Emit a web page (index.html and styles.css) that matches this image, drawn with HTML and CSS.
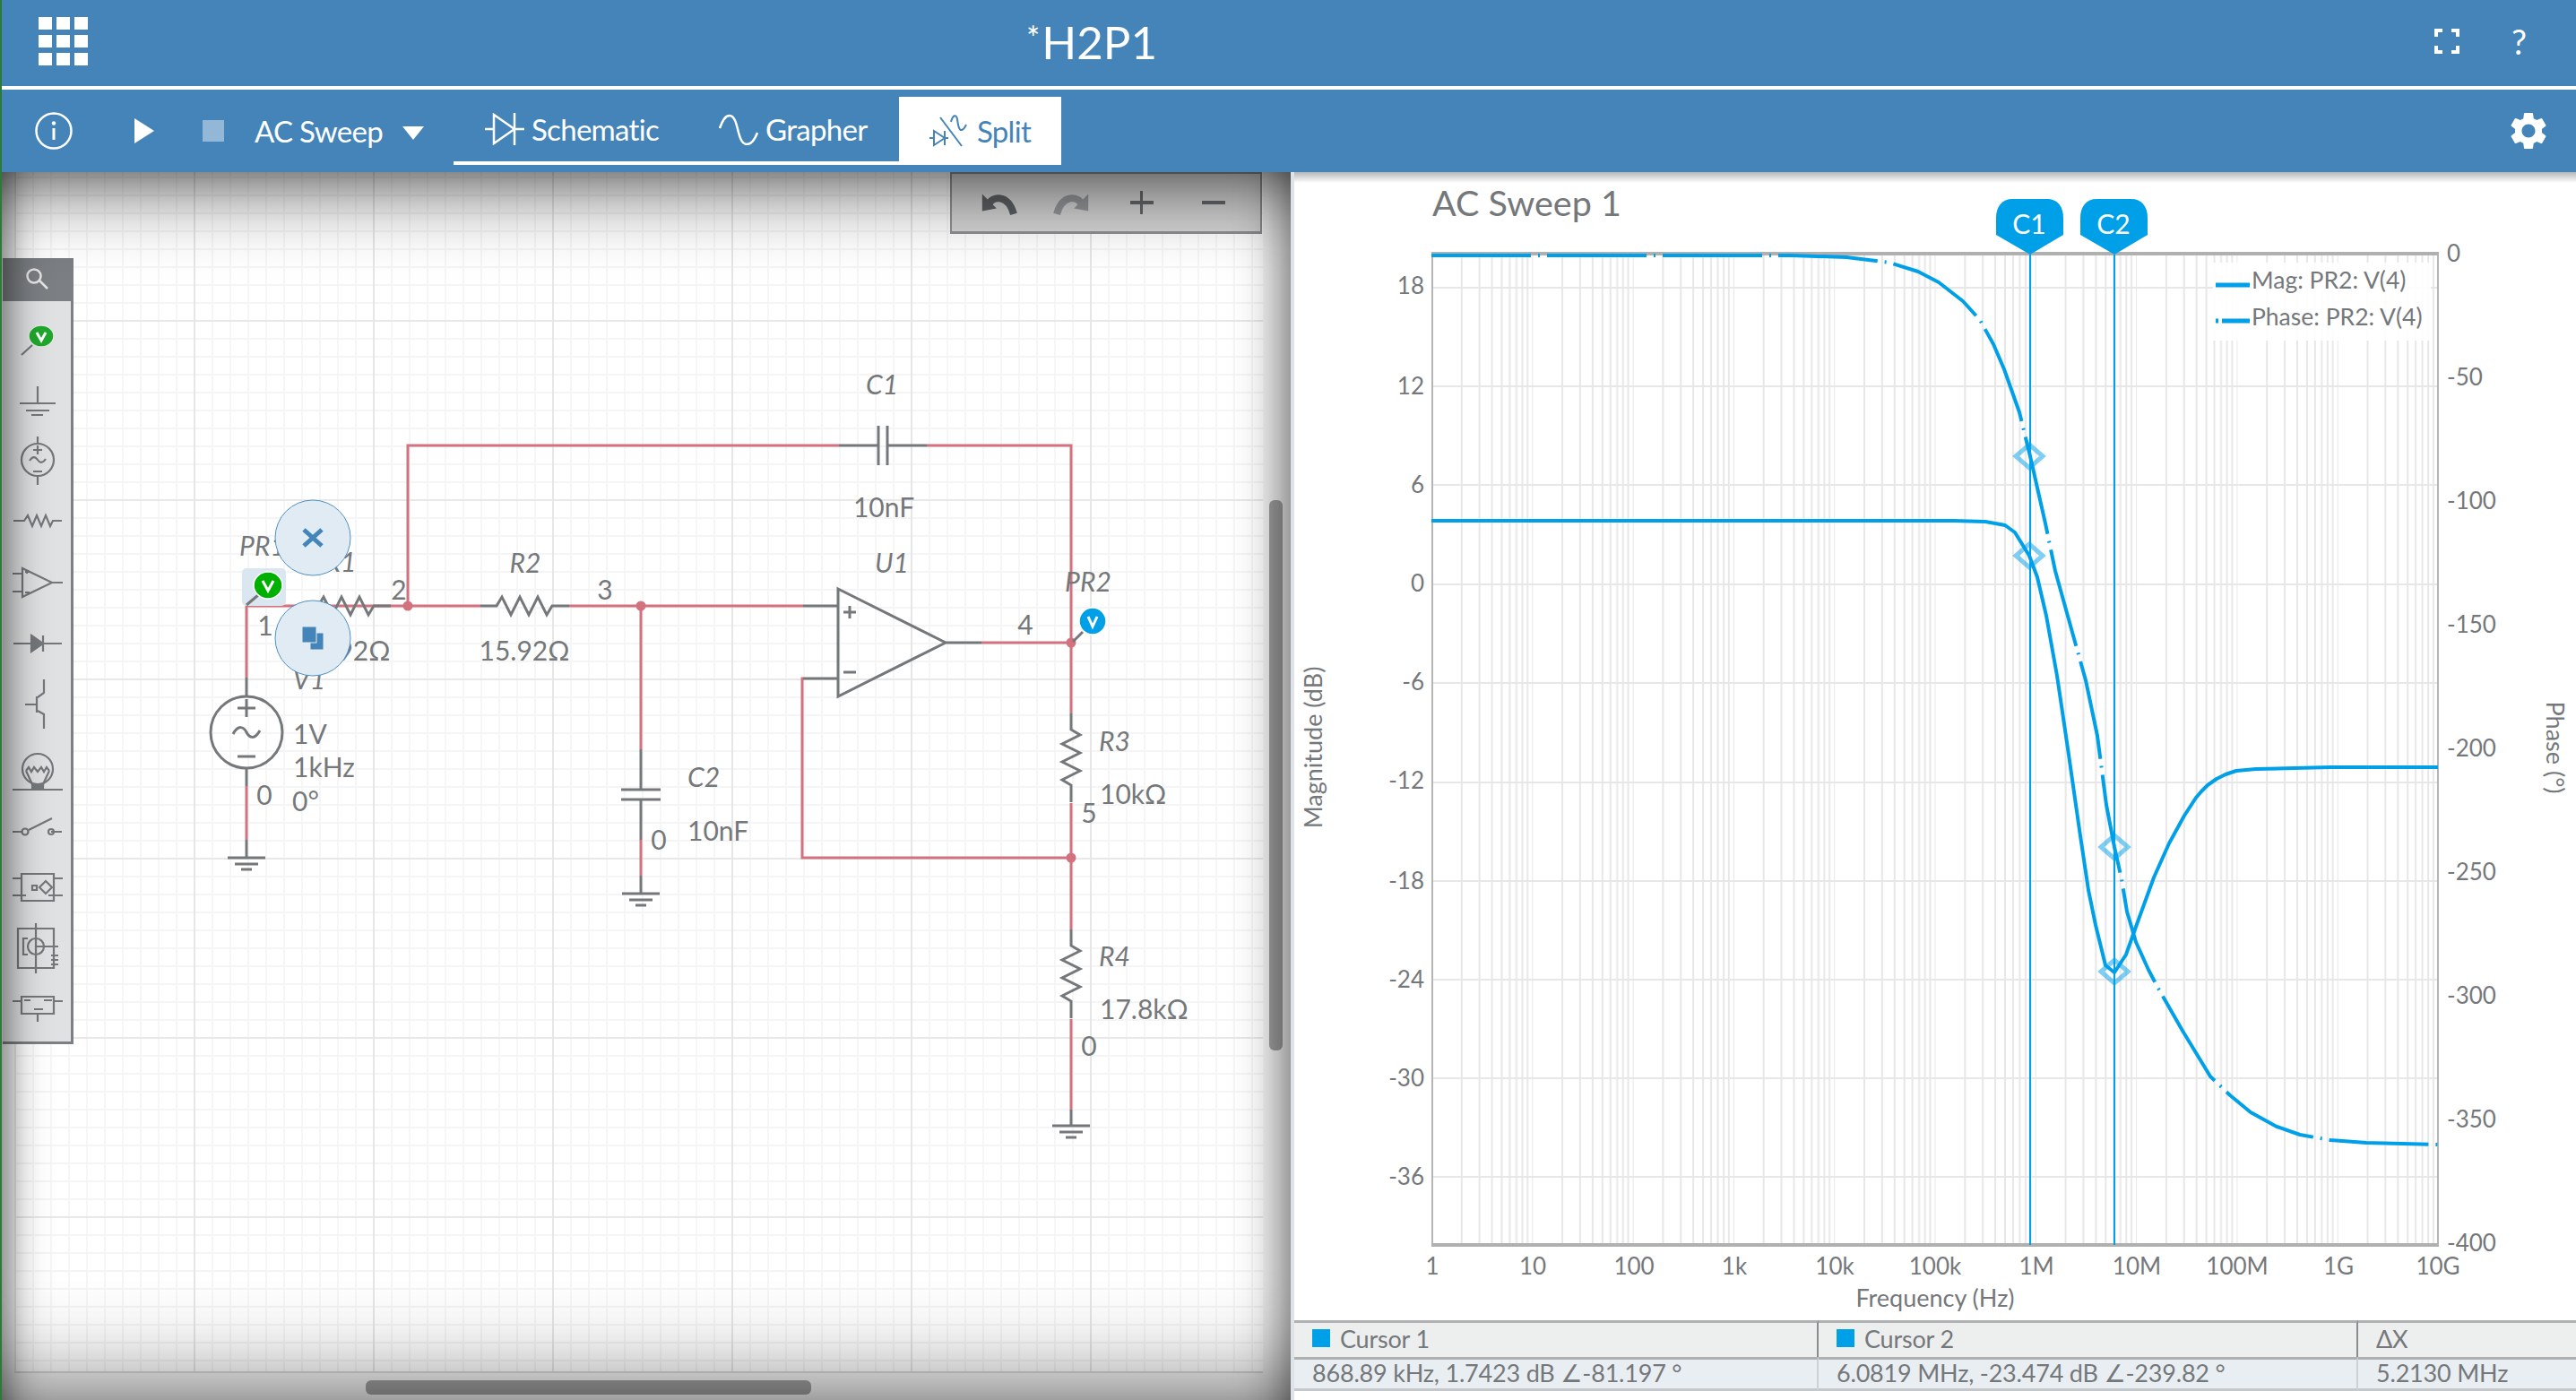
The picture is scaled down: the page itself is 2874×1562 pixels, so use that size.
FILE: index.html

```html
<!DOCTYPE html>
<html lang="en">
<head>
  <meta charset="UTF-8">
  <title>*H2P1</title>
  <link rel="stylesheet" href="styles.css">
</head>
<body>
  <header class="topbar">
    <div class="apps">
      <i></i><i></i><i></i><i></i><i></i><i></i><i></i><i></i><i></i>
    </div>
    <h1 class="title"><span class="star">*</span>H2P1</h1>
    <svg class="fullscreen" viewBox="0 0 28 28">
      <path d="M2 9V2H9M19 2H26V9M26 19V26H19M9 26H2V19"/>
    </svg>
    <span class="help">?</span>
  </header>

  <nav class="toolbar">
    <svg class="info" viewBox="0 0 42 42">
      <circle cx="21" cy="21" r="19.5"/>
      <circle class="solid" cx="21" cy="12.5" r="2.2"/>
      <path d="M21 18V31"/>
    </svg>
    <span class="play"></span>
    <span class="stop"></span>
    <span class="mode">AC Sweep</span>
    <span class="caret"></span>
    <div class="tabs">
      <a class="tab tab-schematic">
        <svg class="tab-icon" viewBox="0 0 44 36">
          <path d="M0 18H10M10 2V34L33 18ZM33 0V36M33 18H44"/>
        </svg>
        Schematic
      </a>
      <a class="tab tab-grapher">
        <svg class="tab-icon" viewBox="0 0 44 36">
          <path d="M1 17C5 6 8 3 12 3C18 3 20 14 22 22C24 30 27 35 31 35C36 35 40 30 43 22"/>
        </svg>
        Grapher
      </a>
      <a class="tab tab-split">
        <svg class="tab-icon" viewBox="0 0 42 38">
          <path d="M0 27H5M5 19V35L17 27ZM17 19V35M17 27H21M12 4L36 36M24 9C26 1 30 0 31 6C32 13 33 19 36 18C39 17 40 14 41 12"/>
        </svg>
        Split
      </a>
    </div>
    <svg class="gear" viewBox="0 0 24 24">
      <path d="M19.14 12.94c.04-.3.06-.61.06-.94 0-.32-.02-.64-.07-.94l2.03-1.58a.49.49 0 0 0 .12-.61l-1.92-3.32a.488.488 0 0 0-.59-.22l-2.39.96c-.5-.38-1.03-.7-1.62-.94l-.36-2.54a.484.484 0 0 0-.48-.41h-3.84c-.24 0-.43.17-.47.41l-.36 2.54c-.59.24-1.13.57-1.62.94l-2.39-.96c-.22-.08-.47 0-.59.22L2.74 8.87c-.12.21-.08.47.12.61l2.03 1.58c-.05.3-.09.63-.09.94s.02.64.07.94l-2.03 1.58a.49.49 0 0 0-.12.61l1.92 3.32c.12.22.37.29.59.22l2.39-.96c.5.38 1.03.7 1.62.94l.36 2.54c.05.24.24.41.48.41h3.84c.24 0 .44-.17.47-.41l.36-2.54c.59-.24 1.13-.56 1.62-.94l2.39.96c.22.08.47 0 .59-.22l1.92-3.32c.12-.22.07-.47-.12-.61l-2.01-1.58zM12 15.6c-1.98 0-3.6-1.62-3.6-3.6s1.62-3.6 3.6-3.6 3.6 1.62 3.6 3.6-1.62 3.6-3.6 3.6z"/>
    </svg>
  </nav>

  <main class="workspace">
    <!-- schematic side -->
    <section class="canvas">
      <div class="grid"></div>

      <svg class="schematic" viewBox="0 192 1440 1370">
        <defs>
          <path id="res" d="M0 0H18L24 -10L34 10L44 -10L54 10L64 -10L74 10L80 0H99"/>
          <path id="gnd" d="M-21 0H21M-13 7H13M-6 13H6"/>
        </defs>

        <!-- wires -->
        <g class="wire">
          <path d="M275 756V676H435M435 676H536M455 676V497H936M1034 497H1195V796"/>
          <path d="M635 676H896M715 676V836M715 937V977"/>
          <path d="M1095 717H1195M896 757H895V957H1195M1195 896V1037M1195 1137V1238"/>
          <path d="M275 877V937"/>
        </g>

        <!-- parts -->
        <g class="part">
          <use href="#res" x="337" y="676"/>
          <use href="#res" x="536" y="676"/>
          <use href="#res" transform="translate(1195 796) rotate(90)"/>
          <use href="#res" transform="translate(1195 1037) rotate(90)"/>
          <path d="M936 497H980M980 475V519M990 475V519M990 497H1034"/>
          <path d="M715 836V881M693 881H737M693 892H737M715 892V937M715 977V997"/>
          <path d="M896 676H935M896 757H935M935 657L1055 717L935 777ZM1055 717H1095"/>
          <path d="M941 683H955M948 676V690M941 750H955"/>
          <path d="M275 756V777M275 857V877M275 937V957M1195 1238V1256"/>
          <circle cx="275" cy="817" r="40"/>
          <path d="M265 790H285M275 780V800M260 819C266 808 272 811 275 817C278 823 284 826 290 815M265 844H285"/>
          <use href="#gnd" x="275" y="957"/>
          <use href="#gnd" x="715" y="997"/>
          <use href="#gnd" x="1195" y="1256"/>
        </g>

        <g class="dots">
          <circle cx="455" cy="676" r="5.5"/>
          <circle cx="715" cy="676" r="5.5"/>
          <circle cx="1195" cy="717" r="5.5"/>
          <circle cx="1195" cy="957" r="5.5"/>
        </g>

        <!-- labels -->
        <g class="label name">
          <text x="984" y="440">C1</text>
          <text x="586" y="639">R2</text>
          <text x="380" y="638">R1</text>
          <text x="995" y="639">U1</text>
          <text x="1214" y="660">PR2</text>
          <text x="293" y="620">PR1</text>
          <text x="345" y="769">V1</text>
        </g>
        <g class="label name start">
          <text x="767" y="878">C2</text>
          <text x="1226" y="838">R3</text>
          <text x="1226" y="1078">R4</text>
        </g>
        <g class="label">
          <text x="986" y="577">10nF</text>
          <text x="585" y="737">15.92Ω</text>
          <text x="385" y="737">15.92Ω</text>
          <text x="675" y="669">3</text>
          <text x="445" y="669">2</text>
          <text x="296" y="709">1</text>
          <text x="295" y="898">0</text>
          <text x="1144" y="708">4</text>
          <text x="1215" y="918">5</text>
          <text x="735" y="948">0</text>
          <text x="1215" y="1178">0</text>
        </g>
        <g class="label start">
          <text x="767" y="938">10nF</text>
          <text x="1227" y="897">10kΩ</text>
          <text x="1227" y="1137">17.8kΩ</text>
          <text x="327" y="830">1V</text>
          <text x="327" y="867">1kHz</text>
          <text x="326" y="905">0°</text>
        </g>

        <!-- probes -->
        <rect class="probe-sel" x="270" y="634" width="49" height="42" rx="5"/>
        <path class="part" d="M275 675L288 664"/>
        <ellipse class="probe-green" cx="299" cy="653" rx="16" ry="15"/>
        <path class="probe-v" d="M293 648L299 659L305 648"/>
        <path class="part" d="M1197 716L1208 705"/>
        <circle class="probe-blue" cx="1219" cy="693" r="15"/>
        <path class="probe-v" d="M1214 688L1219 699L1224 688"/>

        <!-- floating buttons on the selected probe -->
        <circle class="bubble" cx="349" cy="600" r="42"/>
        <path class="bubble-x" d="M339 591L359 609M359 591L339 609"/>
        <circle class="bubble" cx="349" cy="712" r="42"/>
        <rect class="bubble-icon" x="346" y="706" width="15" height="19"/>
        <rect class="bubble-icon front" x="337" y="699" width="16" height="18"/>
      </svg>

      <div class="palette">
        <div class="palette-search">
          <svg viewBox="0 0 30 30">
            <circle cx="12" cy="11" r="7.5"/>
            <path d="M18 16L27 25"/>
          </svg>
        </div>
        <svg class="palette-icons" viewBox="0 336 76 828">
          <path class="part thin" d="M21 396L33 385"/>
          <ellipse class="probe-tool" cx="43" cy="375" rx="14" ry="12"/>
          <path class="probe-v" d="M38 371L43 380L48 371"/>
          <g class="part thin">
            <path d="M39 431V449M19 450H59M26 458H52M32 463H45"/>
            <circle cx="39" cy="513" r="18"/>
            <path d="M39 487V495M39 531V541M34 502H44M39 497V507M30 514C34 508 37 510 39 513C41 516 44 518 48 512M34 526H44"/>
            <path d="M12 581H24L28 575L33 587L38 575L43 587L48 575L53 587L56 581H66"/>
            <path d="M22 634L55 650L22 666ZM11 640H22M11 660H22M55 650H67M25 638H30M27 636V640M25 661H30"/>
            <path d="M12 718H66M45 709V727"/>
            <path class="fill" d="M32 709L45 718L32 727Z"/>
            <path d="M25 786H38M38 777V795M39 778L46 773V758M39 793L46 797V813"/>
            <circle cx="39" cy="858" r="17"/>
            <path d="M26 860L29 856L32 861L35 856L39 861L43 856L46 861L49 856L52 860M26 860L33 875M52 860L45 875M11 881H67"/>
            <path class="fill" d="M33 875H45V881H33Z"/>
            <path d="M11 928H22M29 926L55 913M54 928H66"/>
            <circle cx="25" cy="928" r="3.5"/>
            <circle cx="54" cy="928" r="3"/>
            <path d="M21 975H57V1005H21ZM11 980H21M57 980H67M11 999H26M51 999H67"/>
            <path d="M48 983L55 990L48 997L41 990ZM33 988H38V993H33Z"/>
            <path d="M17 1036H57V1080H17ZM37 1030V1086M37 1056H62M54 1066H62M54 1071H62M54 1076H62M28 1047H23V1065H28"/>
            <circle cx="37" cy="1056" r="9"/>
            <path d="M21 1112H57V1131H21ZM11 1117H21M57 1117H67M39 1131V1140M24 1116H31M46 1116H55M35 1126H45"/>
          </g>
        </svg>
      </div>

      <div class="history">
        <svg class="history-icon" viewBox="0 0 26 20">
          <path class="arc" d="M5 12C8 5 19 4 23 18"/>
          <path class="fill" d="M1 4L11 14L1 16Z"/>
        </svg>
        <svg class="history-icon off" viewBox="0 0 26 20">
          <path class="arc" d="M21 12C18 5 7 4 3 18"/>
          <path class="fill" d="M25 4L15 14L25 16Z"/>
        </svg>
        <span class="history-sign plus"></span>
        <span class="history-sign minus"></span>
      </div>

      <div class="scroll-v"></div>
      <div class="scroll-h"></div>
      <div class="canvas-shade"></div>
    </section>

    <!-- grapher side -->
    <section class="grapher">
      <svg class="chart" viewBox="1440 192 1434 1281">
        <defs>
          <pattern id="decade" x="1597" y="0" width="112.3" height="10" patternUnits="userSpaceOnUse">
            <path class="gridline" d="M0 0V10M33.8 0V10M53.6 0V10M67.6 0V10M78.5 0V10M87.4 0V10M94.9 0V10M101.5 0V10M107.2 0V10"/>
          </pattern>
        </defs>

        <text class="chart-title" x="1598" y="241">AC Sweep 1</text>

        <rect x="1597" y="284" width="1123" height="1105" fill="url(#decade)"/>
        <path class="gridline" d="M1597 321H2720M1597 431H2720M1597 541H2720M1597 652H2720M1597 762H2720M1597 873H2720M1597 983H2720M1597 1093H2720M1597 1203H2720M1597 1313H2720"/>
        <path class="axis-frame" d="M1598 283V1389M2720 283V1389"/>
        <path class="axis-h" d="M1597 283H2721M1597 1389H2721"/>

        <g class="tick end">
          <text x="1589" y="328">18</text>
          <text x="1589" y="440">12</text>
          <text x="1589" y="550">6</text>
          <text x="1589" y="660">0</text>
          <text x="1589" y="770">-6</text>
          <text x="1589" y="880">-12</text>
          <text x="1589" y="992">-18</text>
          <text x="1589" y="1102">-24</text>
          <text x="1589" y="1212">-30</text>
          <text x="1589" y="1322">-36</text>
        </g>
        <g class="tick start">
          <text x="2730" y="292">0</text>
          <text x="2730" y="430">-50</text>
          <text x="2730" y="568">-100</text>
          <text x="2730" y="706">-150</text>
          <text x="2730" y="844">-200</text>
          <text x="2730" y="982">-250</text>
          <text x="2730" y="1120">-300</text>
          <text x="2730" y="1258">-350</text>
          <text x="2730" y="1396">-400</text>
        </g>
        <g class="tick">
          <text x="1598" y="1422">1</text>
          <text x="1710" y="1422">10</text>
          <text x="1823" y="1422">100</text>
          <text x="1935" y="1422">1k</text>
          <text x="2047" y="1422">10k</text>
          <text x="2159" y="1422">100k</text>
          <text x="2272" y="1422">1M</text>
          <text x="2384" y="1422">10M</text>
          <text x="2496" y="1422">100M</text>
          <text x="2609" y="1422">1G</text>
          <text x="2720" y="1422">10G</text>
        </g>
        <text class="axis-label" x="2159" y="1458">Frequency (Hz)</text>
        <text class="axis-label" transform="translate(1475 834) rotate(-90)">Magnitude (dB)</text>
        <text class="axis-label" transform="translate(2841 834) rotate(90)">Phase (°)</text>

        <!-- curves -->
        <polyline class="curve phase" points="1597,285 1998,285 2060,287 2108,293 2140,303 2163,315 2190,336 2209,357 2224,384 2236,412 2253,460 2265,509 2282,584 2293,637 2313,709 2327,759 2340,821 2350,898 2359,945 2367,981 2373,1017 2383,1051 2397,1082 2407,1101 2435,1150 2466,1201 2488,1222 2511,1241 2540,1257 2566,1266 2600,1272 2640,1275 2720,1277"/>
        <polyline class="curve" points="1597,581 2180,581 2215,582 2237,586 2248,594 2264,620 2273,644 2283,687 2295,754 2307,835 2320,926 2330,993 2338,1032 2349,1077 2359,1085 2372,1065 2383,1034 2403,979 2420,941 2437,910 2450,890 2456,883 2463,876 2473,869 2483,864 2495,860 2517,858 2600,856 2720,856"/>

        <!-- cursors -->
        <path class="cursor" d="M2265 284V1389M2359 284V1389"/>
        <path class="flag" d="M2227 262V243C2227 230 2234 222 2245 222H2284C2295 222 2302 230 2302 243V262L2265 284Z"/>
        <path class="flag" d="M2321 262V243C2321 230 2328 222 2339 222H2378C2389 222 2396 230 2396 243V262L2359 284Z"/>
        <text class="flag-text" x="2264" y="261">C1</text>
        <text class="flag-text" x="2358" y="261">C2</text>
        <path class="marker" d="M2264 496L2279 509L2264 522L2249 509ZM2264 607L2279 620L2264 633L2249 620ZM2359 932L2374 945L2359 958L2344 945ZM2359 1071L2374 1084L2359 1097L2344 1084Z"/>

        <!-- legend -->
        <rect class="legend-box" x="2469" y="293" width="243" height="87"/>
        <path class="legend-line" d="M2472 318H2510M2472 358H2475M2479 358H2510"/>
        <text class="legend" x="2512" y="322">Mag: PR2: V(4)</text>
        <text class="legend" x="2512" y="363">Phase: PR2: V(4)</text>
      </svg>

      <div class="cursor-table">
        <div class="cell head"><span class="swatch"></span>Cursor 1</div>
        <div class="cell head"><span class="swatch"></span>Cursor 2</div>
        <div class="cell head">ΔX</div>
        <div class="cell val">868.89 kHz, 1.7423 dB ∠-81.197 °</div>
        <div class="cell val">6.0819 MHz, -23.474 dB ∠-239.82 °</div>
        <div class="cell val">5.2130 MHz</div>
      </div>
    </section>
  </main>
</body>
</html>
```

FILE: styles.css

```css
* {
  box-sizing: border-box;
}

html, body {
  margin: 0;
  height: 100%;
  overflow: hidden;
}

body {
  display: flex;
  flex-direction: column;
  font-family: "Lato", "DejaVu Sans", sans-serif;
  background: #fff;
  color: #75787b;
  border-left: 2px solid #2b7a3a;
}

/* top bar */
.topbar {
  display: flex;
  align-items: center;
  height: 100px;
  padding: 0 0 4px 41px;
  background: #4484b8;
  border-bottom: 4px solid #fff;
  color: #fff;
}

.apps {
  display: grid;
  grid-template-columns: repeat(3, 15px);
  grid-template-rows: repeat(3, 14px);
  gap: 6px 5px;
  width: 55px;
}

.apps i {
  background: #fff;
}

.title {
  margin: 0 0 0 1047px;
  font-size: 51px;
  font-weight: 400;
  line-height: 1;
}

.star {
  font-size: 36px;
  vertical-align: 10px;
  margin-right: 2px;
}

.fullscreen {
  width: 28px;
  height: 28px;
  margin-left: 1425px;
  fill: none;
  stroke: #fff;
  stroke-width: 4;
}

.help {
  margin-left: 58px;
  font-size: 38px;
}

/* second bar */
.toolbar {
  display: flex;
  align-items: center;
  flex: none;
  height: 92px;
  padding-left: 37px;
  background: #4484b8;
  color: #fff;
  font-size: 33px;
}

.info {
  width: 42px;
  height: 42px;
  fill: none;
  stroke: #fff;
  stroke-width: 2.5;
}

.info .solid {
  fill: #fff;
  stroke: none;
}

.info path {
  stroke-width: 3;
}

.play {
  width: 0;
  height: 0;
  margin-left: 69px;
  border-left: 22px solid #fff;
  border-top: 14px solid transparent;
  border-bottom: 14px solid transparent;
}

.stop {
  width: 24px;
  height: 24px;
  margin-left: 54px;
  background: #93b7d6;
}

.mode {
  margin-left: 34px;
  letter-spacing: -0.7px;
}

.caret {
  width: 0;
  height: 0;
  margin-left: 22px;
  margin-top: 4px;
  border-top: 15px solid #fff;
  border-left: 12px solid transparent;
  border-right: 12px solid transparent;
}

.tabs {
  display: flex;
  align-self: flex-start;
  height: 76px;
  margin: 8px 0 0 33px;
  width: 678px;
  border-bottom: 4px solid #fff;
}

.tab {
  display: flex;
  align-items: center;
  gap: 8px;
  height: 72px;
  letter-spacing: -0.7px;
}

.tab-schematic {
  padding-left: 35px;
  width: 296px;
}

.tab-grapher {
  width: 201px;
}

.tab-split {
  justify-content: center;
  gap: 11px;
  width: 181px;
  height: 76px;
  background: #fff;
  color: #4484b8;
}

.tab-icon {
  flex: none;
  width: 44px;
  height: 36px;
  fill: none;
  stroke: #fff;
  stroke-width: 2.5;
}

.tab-split .tab-icon {
  width: 42px;
  height: 38px;
  stroke: #4484b8;
  stroke-width: 2;
}

.gear {
  width: 50px;
  height: 50px;
  margin-left: 1612px;
  fill: #fff;
}

/* panes */
.workspace {
  display: flex;
  flex: 1;
  min-height: 0;
}

.canvas {
  position: relative;
  flex: none;
  width: 1438px;
  background: #f6f6f6;
  overflow: hidden;
}

.grid {
  position: absolute;
  left: 14px;
  top: 0;
  width: 1393px;
  height: 1340px;
  background-color: #fff;
  background-image:
    linear-gradient(#e8e8e8 2px, transparent 2px),
    linear-gradient(90deg, #e6e6e6 2px, transparent 2px),
    linear-gradient(#f5f5f5 2px, transparent 2px),
    linear-gradient(90deg, #f6f6f6 2px, transparent 2px);
  background-size: 200px 200px, 200px 200px, 20px 20px, 20px 20px;
  background-position: 0 165px, 0 0, 0 5px, 0 0;
  border-bottom: 2px solid #d8d8d8;
}

.schematic {
  position: absolute;
  left: -2px;
  top: 0;
  width: 1440px;
  height: 1370px;
}

/* the soft dark vignette over the whole schematic pane */
.canvas-shade {
  position: absolute;
  inset: 0;
  pointer-events: none;
  box-shadow:
    inset 0 100px 100px -100px rgba(0, 0, 0, 0.9),
    inset 0 -120px 120px -120px rgba(0, 0, 0, 0.68),
    inset 50px 0 50px -50px rgba(0, 0, 0, 0.7),
    inset -60px 0 60px -60px rgba(0, 0, 0, 0.7);
}

.wire {
  fill: none;
  stroke: #d4717f;
  stroke-width: 3;
}

.part {
  fill: none;
  stroke: #75787b;
  stroke-width: 3;
}

.part.thin {
  stroke-width: 2.2;
}

.part .fill {
  fill: #75787b;
}

.dots {
  fill: #d4717f;
}

.label {
  fill: #75787b;
  font-size: 30px;
  text-anchor: middle;
}

.label.name {
  font-style: italic;
}

.label.start {
  text-anchor: start;
}

.probe-sel {
  fill: #dbe7f0;
}

.probe-green {
  fill: #00b000;
  stroke: #fff;
  stroke-width: 1.5;
}

.probe-tool {
  fill: #1fa82c;
  stroke: #e8e8e8;
  stroke-width: 1.5;
}

.probe-blue {
  fill: #00a0e9;
  stroke: #fff;
  stroke-width: 1.5;
}

.probe-v {
  fill: none;
  stroke: #fff;
  stroke-width: 3;
}

.bubble {
  fill: #e0ebf3;
  stroke: #4f91c4;
  stroke-width: 1;
}

.bubble-x {
  fill: none;
  stroke: #4484b8;
  stroke-width: 5;
}

.bubble-icon {
  fill: #4484b8;
  stroke: #e0ebf3;
  stroke-width: 1;
}

/* component palette */
.palette {
  position: absolute;
  left: 1px;
  top: 96px;
  width: 79px;
  height: 877px;
  background: #e0e1e2;
  border-right: 3px solid #7c7f83;
  border-bottom: 3px solid #7c7f83;
}

.palette-search {
  display: flex;
  align-items: center;
  justify-content: center;
  height: 48px;
  background: #7c7f83;
}

.palette-search svg {
  width: 30px;
  height: 30px;
  fill: none;
  stroke: #e6e6e6;
  stroke-width: 2.5;
}

.palette-icons {
  display: block;
  width: 76px;
  height: 828px;
}

/* undo / zoom box */
.history {
  position: absolute;
  left: 1058px;
  top: 0;
  display: flex;
  align-items: center;
  width: 348px;
  height: 69px;
  padding-left: 32px;
  gap: 38px;
  background: #d6d6d6;
  border: 2px solid #8e9093;
  border-bottom-width: 3px;
}

.history-icon {
  width: 42px;
  height: 32px;
  fill: none;
  stroke: #5e6164;
}

.history-icon .arc {
  stroke-width: 5;
}

.history-icon .fill {
  fill: #5e6164;
  stroke: none;
}

.history-icon.off {
  stroke: #96999c;
}

.history-icon.off .fill {
  fill: #96999c;
}

.history-sign {
  position: relative;
  width: 26px;
  height: 4px;
  margin-left: 7px;
  background: #66696c;
}

.history-sign.plus::after {
  content: "";
  position: absolute;
  left: 11px;
  top: -11px;
  width: 3px;
  height: 26px;
  background: #66696c;
}

.history-sign.minus {
  margin-left: 16px;
}

.scroll-v {
  position: absolute;
  left: 1414px;
  top: 366px;
  width: 15px;
  height: 614px;
  border-radius: 6px;
  background: #a0a0a0;
}

.scroll-h {
  position: absolute;
  left: 406px;
  top: 1348px;
  width: 497px;
  height: 16px;
  border-radius: 6px;
  background: #a0a0a0;
}

/* grapher */
.grapher {
  flex: none;
  width: 1434px;
  border-left: 4px solid #dde3e8;
  background: #fff;
  position: relative;
}

.grapher::before {
  content: "";
  position: absolute;
  left: 0;
  right: 0;
  top: 0;
  height: 12px;
  background: linear-gradient(#b5b6b8, #fff);
}

.chart {
  display: block;
  width: 1434px;
  height: 1281px;
  margin-left: -4px;
}

.chart-title {
  fill: #75787b;
  font-size: 39.5px;
}

.gridline {
  fill: none;
  stroke: #e7e7e7;
  stroke-width: 2;
}

.axis-frame {
  fill: none;
  stroke: #b5b5b5;
  stroke-width: 2;
}

.axis-h {
  fill: none;
  stroke: #b0b0b0;
  stroke-width: 4;
}

.tick {
  fill: #75787b;
  font-size: 26px;
  text-anchor: middle;
}

.tick.end {
  text-anchor: end;
}

.tick.start {
  text-anchor: start;
}

.axis-label {
  fill: #75787b;
  font-size: 27px;
  text-anchor: middle;
}

.curve {
  fill: none;
  stroke: #00a0e9;
  stroke-width: 4;
  stroke-linejoin: round;
}

.phase {
  stroke-dasharray: 111 8 2 8;
}

.cursor {
  fill: none;
  stroke: #00a0e9;
  stroke-width: 2;
}

.flag {
  fill: #00a0e9;
}

.flag-text {
  fill: #fff;
  font-size: 30px;
  text-anchor: middle;
}

.marker {
  fill: none;
  stroke: #00a0e9;
  stroke-opacity: 0.5;
  stroke-width: 5;
}

.legend-box {
  fill: #fff;
  fill-opacity: 0.9;
}

.legend-line {
  fill: none;
  stroke: #00a0e9;
  stroke-width: 5;
}

.legend {
  fill: #75787b;
  font-size: 26.5px;
}

.cursor-table {
  display: grid;
  grid-template-columns: 585px 602px 1fr;
  grid-template-rows: 41px 38px;
  font-size: 27px;
  letter-spacing: -0.2px;
}

.cell {
  display: flex;
  align-items: center;
  padding: 0 0 4px 20px;
  white-space: nowrap;
}

.head {
  background: #edeeee;
  border-top: 3px solid #aeb0b2;
  border-right: 2px solid #8a8c8e;
}

.head:nth-child(3),
.val:last-child {
  border-right: 0;
}

.val {
  background: #e9eef2;
  border-top: 3px solid #aeb0b2;
  border-bottom: 3px solid #c5c8ca;
  border-right: 2px solid #ccd2d6;
}

.swatch {
  width: 20px;
  height: 20px;
  margin-right: 11px;
  background: #00a0e9;
}
```
